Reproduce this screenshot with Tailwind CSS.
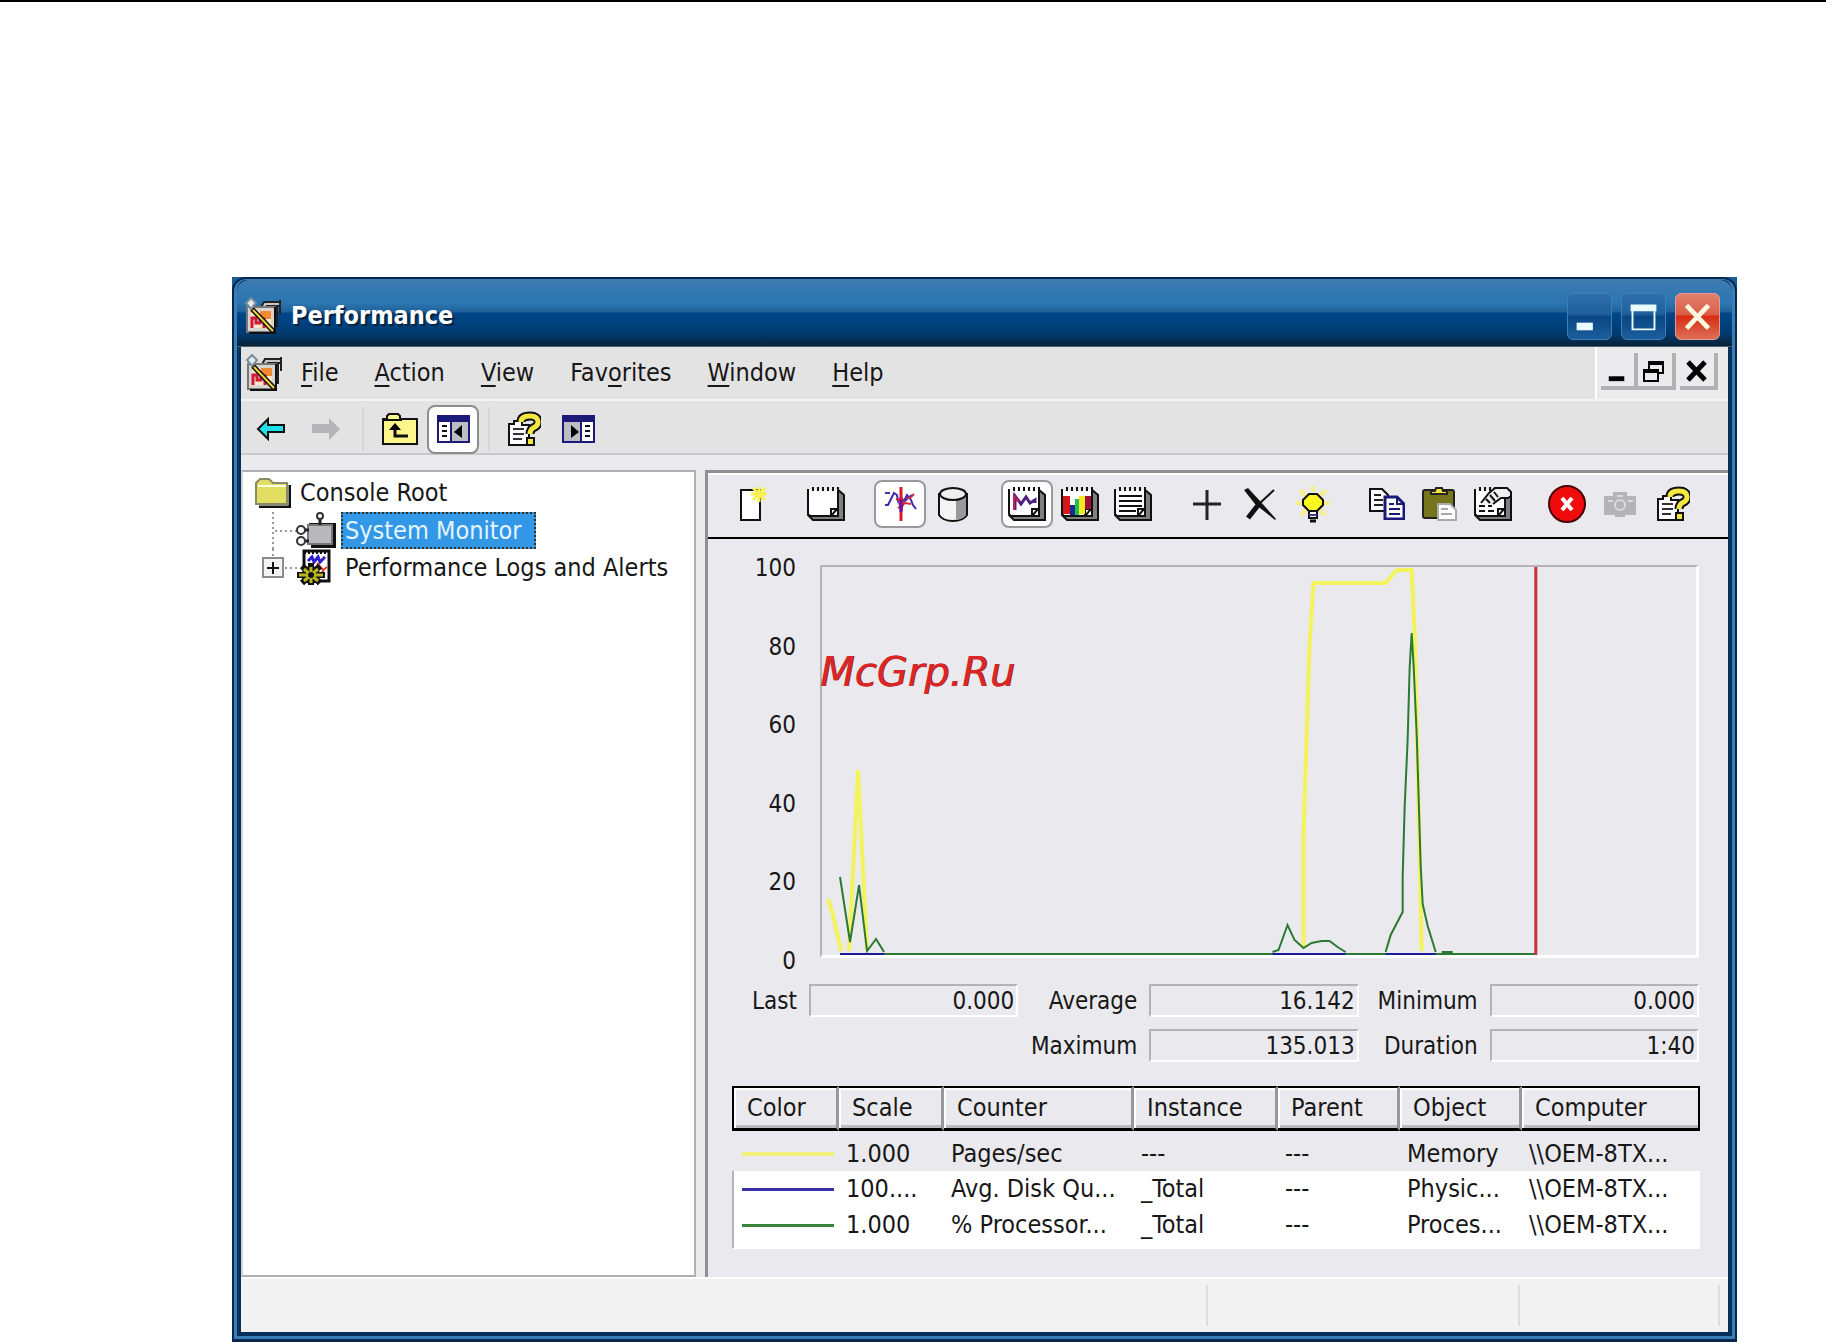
<!DOCTYPE html>
<html lang="en">
  <head>
    <meta charset="UTF-8" />
    <meta name="viewport" content="width=device-width, initial-scale=1.0" />
    <title>Performance</title>
    <script src="https://cdn.jsdelivr.net/npm/@tailwindcss/browser@4"></script>
  </head>
  <body class="bg-white font-['DejaVu_Sans_Condensed','DejaVu_Sans',sans-serif] text-[25px] leading-7 text-neutral-900">
    <!-- shared icons -->
    <svg class="hidden">
      <symbol id="app" viewBox="0 0 38 38">
        <path d="M20 5h16v4h-3v20h-4V12H16z" fill="#c8c8c8" stroke="#222" stroke-width="2" />
        <path d="M22 9h12M36 3v14" stroke="#222" stroke-width="2" />
        <path d="M3 10h28v25H3z" fill="#d8d4d0" stroke="#777" stroke-width="2" />
        <path d="M31 10v26H5" fill="none" stroke="#111" stroke-width="2" />
        <path d="M7 14h20v17H7z" fill="#fbe9c8" />
        <path d="M16 14h11v8H16z" fill="#f08a30" />
        <path d="M8 31V21h4v5h4v-4h4v9" fill="none" stroke="#d01838" stroke-width="3" />
        <path d="M8 12 30 35" stroke="#111" stroke-width="5" />
        <path d="M9 13 29 34" stroke="#f0d040" stroke-width="2" />
        <path d="M7 1l5 5-5 6-5-6z" fill="#dfeaf2" stroke="#7d8b96" stroke-width="2" />
      </symbol>
      <symbol id="help" viewBox="0 0 34 36">
        <path d="M2 13h5v-3h8v4h7v20H2z" fill="#fff" stroke="#111" stroke-width="2" />
        <path d="M6 18h11M6 23h11M6 28h9" stroke="#333" stroke-width="2" />
        <path d="M14 11q0-6 9-6 8 0 8 6 0 4-5 6-3 2-3 6" fill="none" stroke="#111" stroke-width="9" />
        <rect x="19" y="26" width="9" height="9" fill="#111" />
        <path d="M14 11q0-6 9-6 8 0 8 6 0 4-5 6-3 2-3 6" fill="none" stroke="#f2e840" stroke-width="5" />
        <rect x="21" y="28" width="5" height="5" fill="#f2e840" />
      </symbol>
      <symbol id="pad" viewBox="0 0 38 36">
        <path d="M2 30l4 4h31V9l-6-5v26z" fill="#808080" stroke="#111" stroke-width="2" />
        <path d="M1 4h30v19l-7 7H3l-2-2z" fill="#fff" />
        <path d="M1 3v25l2 2h20l8-8V3" fill="none" stroke="#111" stroke-width="2" />
        <path d="M24 29v-6h6l-6 7h7v-8" fill="#fff" stroke="#111" stroke-width="2" />
        <path d="M5 3h27" stroke="#111" stroke-width="4" stroke-dasharray="2 3" />
      </symbol>
    </svg>

    <div class="h-[2px] bg-black"></div>

    <main class="mt-[275px] mr-[89px] ml-[232px] bg-[#1c5c94]">
      <div class="overflow-hidden rounded-t-[14px] border-2 border-b-[3px] border-[#06284f]">
        <div class="rounded-t-xl border-x-[3px] border-t border-b-[3px] border-[#3a7cb4] bg-[#07305a]">
          <!-- title bar -->
          <header class="flex h-[67px] items-center rounded-t-xl bg-[linear-gradient(#3f7cb0,#2a75b2_35%,#205f98_48%,#00478a_49%,#003b70_80%,#0a2238_98%,#7d8790)] pt-[5px] pr-3 pl-[7px]">
            <svg class="size-[38px]"><use href="#app" /></svg>
            <h1 class="ml-[9px] flex-1 font-bold text-white [text-shadow:2px_2px_1px_#052240]">Performance</h1>
            <div class="flex gap-[9px]">
              <button aria-label="Minimize" class="h-[47px] w-[45px] rounded-md border border-[#3d7fb8] bg-[linear-gradient(#2c6fa9,#1f609c_45%,#0a4682_50%,#1c5e9c)]">
                <svg viewBox="0 0 45 47"><rect x="9" y="30" width="17" height="8" fill="#e8fbff" /></svg>
              </button>
              <button aria-label="Maximize" class="h-[47px] w-[45px] rounded-md border border-[#3d7fb8] bg-[linear-gradient(#2c6fa9,#1f609c_45%,#0a4682_50%,#1c5e9c)]">
                <svg viewBox="0 0 45 47"><path d="M11 15h23v22H11z" fill="none" stroke="#e8fbff" stroke-width="2" /><path d="M9 11h27v7H9z" fill="#e8fbff" /></svg>
              </button>
              <button aria-label="Close" class="h-[47px] w-[45px] rounded-md border border-[#e89a90] bg-[linear-gradient(#e08070,#dc6048_45%,#d82c14_50%,#dd7058)]">
                <svg viewBox="0 0 45 47"><path d="M11 12 34 36M34 12 11 36" stroke="#fff8e0" stroke-width="5" /></svg>
              </button>
            </div>
          </header>

          <div class="mx-1 mb-1 bg-[#ebebee]">
            <!-- menu bar -->
            <div class="flex h-[54px] border-b-2 border-[#f3f3f3] bg-[#e3e3e3]">
              <nav class="flex flex-1 items-center gap-9 pl-1">
                <svg class="-mr-[18px] size-[38px]"><use href="#app" /></svg>
                <button><u class="underline-offset-4">F</u>ile</button>
                <button><u class="underline-offset-4">A</u>ction</button>
                <button><u class="underline-offset-4">V</u>iew</button>
                <button>Fav<u class="underline-offset-4">o</u>rites</button>
                <button><u class="underline-offset-4">W</u>indow</button>
                <button><u class="underline-offset-4">H</u>elp</button>
              </nav>
              <div class="flex border-l-2 border-white bg-[#ebebeb] pt-[6px] pr-[10px] pl-1">
                <button aria-label="Minimize child" class="h-[37px] w-[37px] border-r-4 border-b-4 border-r-[#b0b0b5] border-b-[#b0b0b5] bg-[#ebebee]">
                  <svg viewBox="0 0 34 33"><rect x="8" y="24" width="16" height="5" /></svg>
                </button>
                <button aria-label="Restore child" class="h-[37px] w-[38px] border-r-4 border-b-4 border-r-[#b0b0b5] border-b-[#b0b0b5] bg-[#ebebee]">
                  <svg viewBox="0 0 34 33" fill="#ebebee" stroke="#000" stroke-width="2"><path d="M11 10h14v10H11z" /><path d="M10 8h16v4H10z" fill="#000" stroke="none" /><path d="M6 18h14v10H6z" /><path d="M5 16h16v4H5z" fill="#000" stroke="none" /></svg>
                </button>
                <button aria-label="Close child" class="ml-1 h-[37px] w-[38px] border-r-4 border-b-4 border-r-[#b0b0b5] border-b-[#b0b0b5] bg-[#ebebee]">
                  <svg viewBox="0 0 34 33"><path d="M8 9 25 27M25 9 8 27" stroke="#000" stroke-width="5" /></svg>
                </button>
              </div>
            </div>

            <!-- console toolbar -->
            <div class="flex h-[54px] items-center border-b-2 border-[#c9c9cc] bg-[#e3e3e3] pt-1 pl-[7px]">
              <button aria-label="Back" class="flex w-[46px] justify-center">
                <svg class="h-[24px] w-[30px]" viewBox="0 0 30 24"><path d="M2 12 12 2v6h16v7H12v7z" fill="#20e0e8" stroke="#111" stroke-width="2" /></svg>
              </button>
              <button aria-label="Forward" class="ml-2 flex w-[48px] justify-center">
                <svg class="h-[24px] w-[30px]" viewBox="0 0 30 24"><path d="M29 12 18 1v6H1v9h17v7z" fill="#b4b4b8" /></svg>
              </button>
              <div class="ml-3 h-11 w-[2px] bg-[#d6d6d9]"></div>
              <button aria-label="Up one level" class="ml-[11px] flex w-[50px] justify-center">
                <svg class="h-[32px] w-[36px]" viewBox="0 0 36 32"><path d="M1 6h4V3l2-2h9l2 2v3h17v25H1z" fill="#fdf68a" stroke="#111" stroke-width="2" /><path d="M1 7h19" stroke="#111" stroke-width="2" /><path d="M13 15v8h13" fill="none" stroke="#111" stroke-width="3" /><path d="M7 17 13 10l6 7z" /></svg>
              </button>
              <button aria-label="Show console tree" class="ml-[2px] flex h-[49px] w-[52px] items-center justify-center rounded-lg border-2 border-[#8d8d8d] bg-white">
                <svg class="h-[28px] w-[33px]" viewBox="0 0 33 28"><path d="M1 1h31v26H1z" fill="#fff" stroke="#1c1a78" stroke-width="2" /><path d="M1 1h31v6H1z" fill="#1c1a78" /><path d="M14 7h17v19H14z" fill="#bdbdc4" /><path d="M14 6v21" stroke="#1c1a78" stroke-width="2" /><path d="M5 11h5M5 16h5M5 21h5" stroke="#111" stroke-width="2" /><path d="M25 10v13l-8-6z" /></svg>
              </button>
              <div class="ml-[9px] h-11 w-[2px] bg-[#d6d6d9]"></div>
              <button aria-label="Help" class="ml-2 flex w-[52px] justify-center">
                <svg class="h-[36px] w-[34px]"><use href="#help" /></svg>
              </button>
              <button aria-label="Show action pane" class="flex w-[56px] justify-center">
                <svg class="h-[28px] w-[33px]" viewBox="0 0 33 28"><path d="M1 1h31v26H1z" fill="#fff" stroke="#1c1a78" stroke-width="2" /><path d="M1 1h31v6H1z" fill="#1c1a78" /><path d="M2 7h17v19H2z" fill="#bdbdc4" /><path d="M19 6v21" stroke="#1c1a78" stroke-width="2" /><path d="M23 11h5M23 16h5M23 21h5" stroke="#111" stroke-width="2" /><path d="M9 10v13l8-6z" /></svg>
              </button>
            </div>

            <div class="mt-[15px] flex">
              <!-- console tree -->
              <aside class="w-[455px] border-2 border-[#b0b0b4] border-l-[#d5d5d8] bg-white pt-[2px]">
                <ul>
                  <li>
                    <button class="flex h-[38px] items-center gap-[9px] pl-3">
                      <svg class="h-[30px] w-[36px]" viewBox="0 0 36 30"><path d="M4 29h31V7" fill="none" stroke="#111" stroke-width="3" /><path d="M1 5l4-4h9l4 4h14v21H1z" fill="#e2de62" stroke="#8a8a6a" stroke-width="2" /><path d="M3 8h28" stroke="#fffde0" stroke-width="2" /></svg>
                      Console Root
                    </button>
                    <ul>
                      <li class="flex h-[37px] items-center">
                        <svg class="ml-[18px] h-[37px] w-[78px]" viewBox="0 0 78 37">
                          <path d="M12 0v37M14 19h22" stroke="#999" stroke-width="2" stroke-dasharray="2 3" />
                          <path d="M48 13h25v21H50" fill="none" stroke="#111" stroke-width="4" />
                          <path d="M47 13h24v19H47z" fill="#b9b9bd" stroke="#777" stroke-width="2" />
                          <path d="M59 4v9M42 18h6M42 29h6" stroke="#222" stroke-width="3" />
                          <g fill="#fff" stroke="#333" stroke-width="2"><circle cx="59" cy="4" r="3" /><circle cx="40" cy="18" r="4" /><circle cx="40" cy="29" r="4" /></g>
                        </svg>
                        <button class="ml-[2px] h-[37px] border-2 border-dotted border-[#3a3020] bg-[#3397e8] pr-3 pl-[2px] text-[#e4f4ff]">System Monitor</button>
                      </li>
                      <li class="flex h-[38px] items-center">
                        <svg class="ml-[18px] h-[38px] w-[78px]" viewBox="0 0 78 38">
                          <path d="M12 0v8M24 19h12" stroke="#999" stroke-width="2" stroke-dasharray="2 3" />
                          <path d="M2 9h20v19H2z" fill="#f4f4f4" stroke="#8c8c8c" stroke-width="2" />
                          <path d="M6 19h12M12 13v12" stroke="#111" stroke-width="2" />
                          <path d="M43 2h25v30H43z" fill="#fff" stroke="#111" stroke-width="3" />
                          <path d="M43 3h25" stroke="#111" stroke-width="4" stroke-dasharray="2 2" />
                          <path d="M47 12l4-4 2 5 4-5 2 5 5-5" fill="none" stroke="#2a20d0" stroke-width="3" />
                          <path d="M56 14l6 7 4-3M60 26l3-6" fill="none" stroke="#e04020" stroke-width="2" />
                          <path d="M36 26h28M50 14v22M41 17l18 17M59 17 41 34" stroke="#111" stroke-width="6" />
                          <circle cx="50" cy="26" r="9" fill="#111" />
                          <path d="M38 26h24M50 18v16M43 20l14 12M57 20 43 32" stroke="#b9b820" stroke-width="3" />
                          <circle cx="50" cy="26" r="3" fill="#111" />
                        </svg>
                        <button class="ml-[6px]">Performance Logs and Alerts</button>
                      </li>
                    </ul>
                  </li>
                </ul>
              </aside>

              <!-- system monitor -->
              <section class="ml-[9px] flex-1 border-t-[3px] border-l-[3px] border-[#8f8f94] bg-[#eae9ed]">
                <div class="flex h-[66px] items-center gap-[22px] border-t-2 border-b-2 border-t-white border-b-black pr-4 pb-1 pl-[18px]">
                  <button aria-label="New counter set" class="flex w-[52px] justify-center">
                    <svg class="h-[36px] w-[30px]" viewBox="0 0 30 36"><path d="M4 4h19v30H4z" fill="#fff" stroke="#111" stroke-width="2" /><path d="M22 1v15M14 8h16M16 2l12 12M28 2 16 14" stroke="#f4f050" stroke-width="3" /></svg>
                  </button>
                  <button aria-label="Clear display" class="flex w-[52px] justify-center">
                    <svg class="h-[36px] w-[38px]"><use href="#pad" /></svg>
                  </button>
                  <div class="flex gap-px">
                    <button aria-label="View current activity" class="flex h-[48px] w-[52px] items-center justify-center rounded-lg border-2 border-[#9a9a9e] bg-white">
                      <svg class="h-[36px] w-[34px]" viewBox="0 0 34 36" fill="none" stroke-width="2"><path d="M2 19h3l3-6 3-6 3 2 1 6 3-3 3 3 3-6 4 5 2 5 3 4" stroke="#3a2ab0" /><path d="M2 7h5M16 16l2 8 3-8 5-5 3-2" stroke="#4a30a8" /><path d="M24 12h3l4-4M13 13l9 3M15 22l7-5 6 1" stroke="#d02840" /><path d="M18 1v34" stroke="#d81828" stroke-width="3" /><path d="M18 14v12" stroke="#7010a0" stroke-width="3" /></svg>
                    </button>
                    <button aria-label="View log data" class="flex w-[52px] items-center justify-center">
                      <svg class="h-[36px] w-[30px]" viewBox="0 0 30 36"><path d="M1 8v21q4 6 14 6t14-6V8z" fill="#f4f4f4" stroke="#111" stroke-width="2" /><path d="M18 14q7 0 10-4v19q-3 4-10 5z" fill="#999" /><ellipse cx="15" cy="8" rx="13" ry="6" fill="#eee" stroke="#111" stroke-width="2" /></svg>
                    </button>
                  </div>
                  <div class="flex gap-px">
                    <button aria-label="View graph" class="flex h-[48px] w-[52px] items-center justify-center rounded-lg border-2 border-[#9a9a9e] bg-white">
                      <svg class="h-[36px] w-[38px]" viewBox="0 0 38 36"><use href="#pad" /><path d="M7 24V10l6 8 5-7 4 6 5-3v3" fill="none" stroke="#4a2080" stroke-width="3" /><path d="M6 24V10l5 6" fill="none" stroke="#c02050" stroke-width="2" /></svg>
                    </button>
                    <button aria-label="View histogram" class="flex w-[52px] items-center justify-center">
                      <svg class="h-[36px] w-[38px]" viewBox="0 0 38 36"><use href="#pad" /><path d="M2 10h7v18H2z" fill="#d81818" /><path d="M9 19h5v10H9z" fill="#1a2a90" /><path d="M14 13h4v16h-4z" fill="#20c050" /><path d="M18 10h6v18h-6z" fill="#f6e820" /><path d="M24 10h6v13h-6z" fill="#a01038" /></svg>
                    </button>
                    <button aria-label="View report" class="flex w-[52px] items-center justify-center">
                      <svg class="h-[36px] w-[38px]" viewBox="0 0 38 36"><use href="#pad" /><path d="M5 10h23M5 15h23M5 20h23M5 25h17" stroke="#111" stroke-width="2" /></svg>
                    </button>
                  </div>
                  <div class="flex gap-px">
                    <button aria-label="Add" class="flex w-[52px] items-center justify-center">
                      <svg class="h-[34px] w-[30px]" viewBox="0 0 30 34"><path d="M1 17h28M15 3v30" stroke="#222" stroke-width="3" /></svg>
                    </button>
                    <button aria-label="Delete" class="flex w-[52px] items-center justify-center">
                      <svg class="h-[34px] w-[34px]" viewBox="0 0 34 34"><path d="M1 3l4-2 12 13 16 18-1 1L12 17z" fill="#111" /><path d="M31 3 16 17 7 30" fill="none" stroke="#111" stroke-width="2" /><path d="M16 17 5 31" stroke="#111" stroke-width="5" /></svg>
                    </button>
                    <button aria-label="Highlight" class="flex w-[52px] items-center justify-center">
                      <svg class="h-[38px] w-[36px]" viewBox="0 0 36 38"><path d="M18 1v6M5 5l6 6M31 5l-6 6M1 18h6M35 18h-6M6 30l5-5M30 30l-5-5" stroke="#f6f08a" stroke-width="4" /><path d="M14 9h8l6 6v5l-6 6h-8l-6-6v-5z" fill="#fbf820" stroke="#111" stroke-width="2" /><path d="M14 26h8v7h-8z" fill="#fff" stroke="#111" stroke-width="2" /><path d="M14 30h8" stroke="#40408a" stroke-width="2" /><path d="M15 36h6" stroke="#111" stroke-width="3" /></svg>
                    </button>
                  </div>
                  <div class="flex gap-px">
                    <button aria-label="Copy properties" class="flex w-[52px] items-center justify-center">
                      <svg class="h-[32px] w-[36px]" viewBox="0 0 36 32"><path d="M1 1h12l6 6v16H1z" fill="#fff" stroke="#111" stroke-width="2" /><path d="M5 7h7M5 12h9M5 17h9" stroke="#222" stroke-width="2" /><path d="M16 9h12l7 7v15H16z" fill="#fff" stroke="#1c1a78" stroke-width="3" /><path d="M28 9v7h7" fill="none" stroke="#1c1a78" stroke-width="2" /><path d="M20 16h5M20 21h11M20 26h11" stroke="#1c1a78" stroke-width="2" /></svg>
                    </button>
                    <button aria-label="Paste counter list" class="flex w-[52px] items-center justify-center">
                      <svg class="h-[34px] w-[36px]" viewBox="0 0 36 34"><rect x="1" y="3" width="31" height="28" rx="2" fill="#77751c" stroke="#222" stroke-width="2" /><path d="M9 7V4h4l1-3h6l1 3h4v3z" fill="#f4e838" stroke="#222" stroke-width="2" /><path d="M16 17h12l6 6v10H16z" fill="#fff" stroke="#aaa" stroke-width="2" /><path d="M19 22h7M19 27h11" stroke="#aaa" stroke-width="2" /></svg>
                    </button>
                    <button aria-label="Properties" class="flex w-[52px] items-center justify-center">
                      <svg class="h-[36px] w-[38px]" viewBox="0 0 38 36"><use href="#pad" /><path d="M5 20h6M14 20h4M5 25h6M14 25h6" stroke="#111" stroke-width="2" /><path d="M7 17 15 7l6-5h12l4 4v4l-3 2h-7l-8 6" fill="#eee" stroke="#111" stroke-width="2" /><path d="M12 13l4 4M16 9l5 6M20 6l4 5" stroke="#111" stroke-width="2" /></svg>
                    </button>
                  </div>
                  <div class="flex gap-px">
                    <button aria-label="Freeze display" class="flex w-[52px] items-center justify-center">
                      <svg class="size-[38px]" viewBox="0 0 38 38"><circle cx="19" cy="19" r="18" fill="#f00c0c" stroke="#400" stroke-width="2" /><path d="M14 13 24 25M24 13 14 25" stroke="#fff" stroke-width="4" /></svg>
                    </button>
                    <button aria-label="Update data" class="flex w-[52px] items-center justify-center">
                      <svg class="h-[27px] w-[34px]" viewBox="0 0 34 27"><path d="M1 5h9V1h14v4h9v19H22v2H12v-2H1z" fill="#b4b4b8" /><circle cx="17" cy="14" r="5" fill="none" stroke="#dadade" stroke-width="2" /><path d="M5 10h5M25 10h5M14 5h6" stroke="#dadade" stroke-width="2" /></svg>
                    </button>
                    <button aria-label="Help topics" class="flex w-[52px] items-center justify-center">
                      <svg class="h-[36px] w-[34px]"><use href="#help" /></svg>
                    </button>
                  </div>
                </div>

                <!-- graph -->
                <div class="mt-[14px] mr-[29px] flex gap-6">
                  <div class="flex h-[422px] w-[88px] flex-col justify-between pt-px text-right text-[24px]">
                    <span>100</span><span>80</span><span>60</span><span>40</span><span>20</span><span>0</span>
                  </div>
                  <div class="mt-3 h-[393px] flex-1 border-t-2 border-r-[3px] border-b-[3px] border-l-2 border-[#b4b3b8] border-r-white border-b-white">
                    <svg class="h-[390px] w-full" viewBox="1 2 873 390" preserveAspectRatio="none" fill="none">
                      <path d="M7 334 12 350 20 386M28 386 37 205 46 386M482 382V270L488 80 492 18H564L575 5H590L593 70 596 200 600 386" stroke="#f3f35c" stroke-width="4" />
                      <path d="M19 389H714" stroke="#1a1a9a" stroke-width="2" />
                      <path d="M63 389H451M524 389H564M614 389H714" stroke="#2a7a34" stroke-width="2" />
                      <path d="M19 312 29 377 38 320 46 386 55 374 63 387M451 387 457 385 466 360 473 375 482 383 490 378 500 376H508L516 382 524 387M564 387 569 370 581 347V312L583 242 586 174 588 102 590 68 592 102 595 169 597 234 599 301 601 339 606 361 614 387M620 387H631" stroke="#2a7a34" stroke-width="2" />
                      <path d="M714 2V390" stroke="#cc3038" stroke-width="3" />
                    </svg>
                  </div>
                </div>

                <!-- statistics -->
                <div class="mt-[9px] mr-[29px] ml-[23px] grid grid-cols-[66px_1fr_107px_1fr_107px_1fr] items-center gap-x-3 gap-y-3 text-right text-[24px]">
                  <label for="last">Last</label>
                  <input id="last" readonly value="0.000" class="h-[33px] w-full min-w-0 border-2 border-[#b4b3b8] border-r-white border-b-white pr-[2px] text-right" />
                  <label for="average">Average</label>
                  <input id="average" readonly value="16.142" class="h-[33px] w-full min-w-0 border-2 border-[#b4b3b8] border-r-white border-b-white pr-[2px] text-right" />
                  <label for="minimum">Minimum</label>
                  <input id="minimum" readonly value="0.000" class="h-[33px] w-full min-w-0 border-2 border-[#b4b3b8] border-r-white border-b-white pr-[2px] text-right" />
                  <label for="maximum" class="col-start-3">Maximum</label>
                  <input id="maximum" readonly value="135.013" class="h-[33px] w-full min-w-0 border-2 border-[#b4b3b8] border-r-white border-b-white pr-[2px] text-right" />
                  <label for="duration">Duration</label>
                  <input id="duration" readonly value="1:40" class="h-[33px] w-full min-w-0 border-2 border-[#b4b3b8] border-r-white border-b-white pr-[2px] text-right" />
                </div>

                <!-- counters -->
                <div class="mt-[24px] mr-[28px] mb-[28px] ml-[24px] border-b-2 border-l-2 border-b-white border-l-[#b4b3b8] bg-white pb-1">
                  <table class="-ml-[2px] w-[calc(100%+2px)] table-fixed border-separate border-spacing-0 text-left whitespace-nowrap">
                    <thead>
                      <tr class="h-[45px] bg-[#eae9ed] [&>th]:border-t-2 [&>th]:border-r-[3px] [&>th]:border-b-[3px] [&>th]:border-t-black [&>th]:border-r-[#98979c] [&>th]:border-b-black [&>th]:pl-[13px] [&>th]:font-normal [&>th]:shadow-[inset_2px_2px_#fff,inset_0_-3px_#bcbbc0]">
                        <th class="w-[107px] border-l-2 border-l-black">Color</th>
                        <th class="w-[105px]">Scale</th>
                        <th class="w-[190px]">Counter</th>
                        <th class="w-[144px]">Instance</th>
                        <th class="w-[122px]">Parent</th>
                        <th class="w-[122px]">Object</th>
                        <th class="border-r-2! border-r-black!">Computer</th>
                      </tr>
                    </thead>
                    <tbody class="[&_td]:p-0 [&_td]:pl-[7px]">
                      <tr class="h-[40px] bg-[#eae9ed] [&>td]:pt-[6px]!">
                        <td><div class="ml-[3px] h-[4px] w-[92px] bg-[#f1f07a]"></div></td>
                        <td>1.000</td><td>Pages/sec</td><td>---</td><td>---</td><td>Memory</td><td>\\OEM-8TX...</td>
                      </tr>
                      <tr class="h-[36px]">
                        <td><div class="ml-[3px] h-[3px] w-[92px] bg-[#3a30a8]"></div></td>
                        <td>100....</td><td>Avg. Disk Qu...</td><td>_Total</td><td>---</td><td>Physic...</td><td>\\OEM-8TX...</td>
                      </tr>
                      <tr class="h-[36px]">
                        <td><div class="ml-[3px] h-[3px] w-[92px] bg-[#3a8440]"></div></td>
                        <td>1.000</td><td>% Processor...</td><td>_Total</td><td>---</td><td>Proces...</td><td>\\OEM-8TX...</td>
                      </tr>
                    </tbody>
                  </table>
                </div>
              </section>
            </div>

            <!-- status bar -->
            <footer class="flex h-[55px] border-t-2 border-white bg-[#f2f2f2] py-[6px] pr-2">
              <div class="flex-1 border-r-2 border-[#dcdcdc]"></div>
              <div class="w-[312px] border-r-2 border-[#dcdcdc]"></div>
              <div class="w-[200px] border-r-2 border-[#dcdcdc]"></div>
            </footer>
          </div>
        </div>
      </div>
    </main>

    <!-- watermark -->
    <p class="absolute top-[648px] left-[820px] font-['DejaVu_Sans',sans-serif] text-[40px] leading-[48px] text-[#dc2626] italic [text-shadow:1px_0_#8a2020]">McGrp.Ru</p>
  </body>
</html>
